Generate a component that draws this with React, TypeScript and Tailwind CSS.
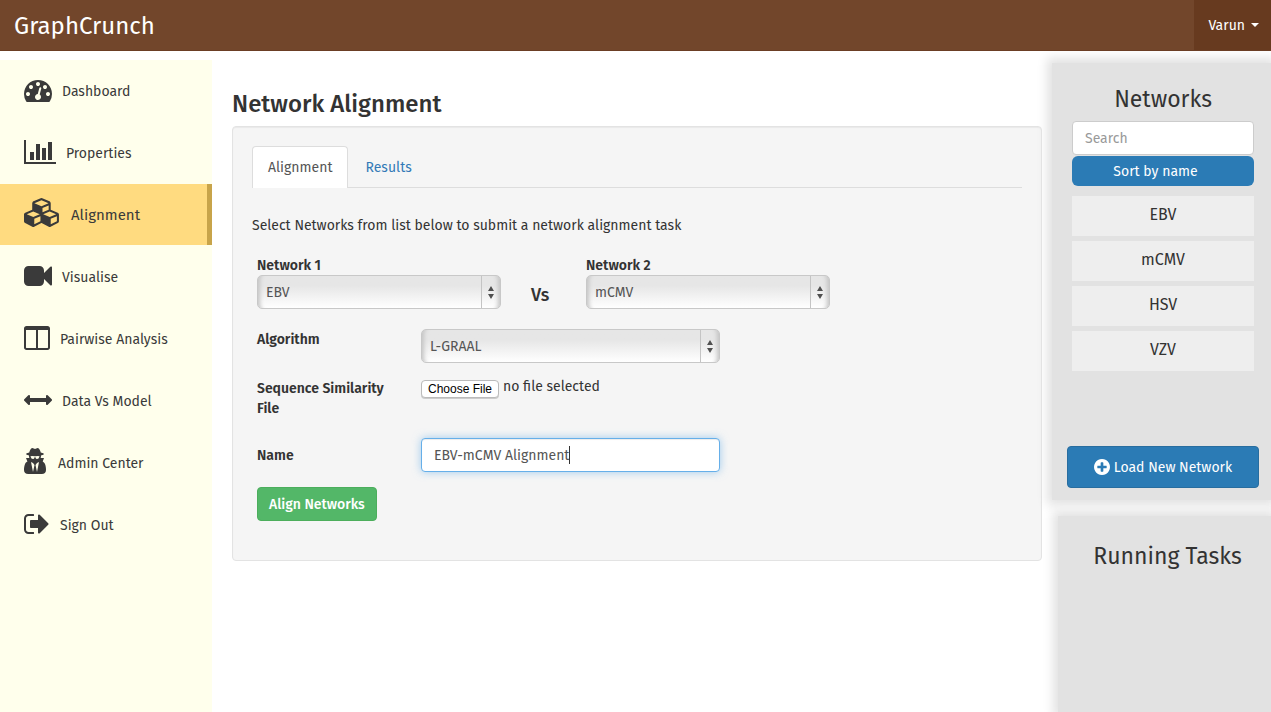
import React, { useState } from "react";

type Glyph = { path: string; viewBox: string; size: string };

const glyphs = {
  dashboard: {
    viewBox: "0 0 1792 1792",
    size: "h-7 w-7",
    path: "M384 1152q0-53-37.5-90.5t-90.5-37.5-90.5 37.5-37.5 90.5 37.5 90.5 90.5 37.5 90.5-37.5 37.5-90.5zm192-448q0-53-37.5-90.5t-90.5-37.5-90.5 37.5-37.5 90.5 37.5 90.5 90.5 37.5 90.5-37.5 37.5-90.5zm428 481l101-382q6-26-7.5-48.5t-38.5-29.5-48 6.5-30 39.5l-101 382q-60 5-107 43.5t-63 98.5q-20 77 20 146t117 89 146-20 89-117q16-60-6-117t-72-91zm660-33q0-53-37.5-90.5t-90.5-37.5-90.5 37.5-37.5 90.5 37.5 90.5 90.5 37.5 90.5-37.5 37.5-90.5zm-640-640q0-53-37.5-90.5t-90.5-37.5-90.5 37.5-37.5 90.5 37.5 90.5 90.5 37.5 90.5-37.5 37.5-90.5zm448 192q0-53-37.5-90.5t-90.5-37.5-90.5 37.5-37.5 90.5 37.5 90.5 90.5 37.5 90.5-37.5 37.5-90.5zm320 448q0 261-141 483-19 29-54 29h-1402q-35 0-54-29-141-221-141-483 0-182 71-348t191-286 286-191 348-71 348 71 286 191 191 286 71 348z",
  },
  bars: {
    viewBox: "0 0 2048 1792",
    size: "h-7 w-8",
    path: "M640 896v512h-256v-512h256zm384-512v1024h-256v-1024h256zm1024 1152v128h-2048v-1536h128v1408h1920zm-640-896v768h-256v-768h256zm384-384v1152h-256v-1152h256z",
  },
  cubes: {
    viewBox: "0 0 2304 1792",
    size: "h-[29px] w-[37px]",
    path: "M640 1632l384-192v-314l-384 164v342zm-64-454l404-173-404-173-404 173zm1088 454l384-192v-314l-384 164v342zm-64-454l404-173-404-173-404 173zm-448-293l384-165v-266l-384 164v267zm-64-379l441-189-441-189-441 189zm1088 518v416q0 36-19 67t-52 47l-448 224q-25 14-57 14t-57-14l-448-224q-5-2-7-4-2 2-7 4l-448 224q-25 14-57 14t-57-14l-448-224q-33-16-52-47t-19-67v-416q0-38 21.5-70t56.5-48l434-186v-400q0-38 21.5-70t56.5-48l448-192q23-10 50-10t50 10l448 192q35 16 56.5 48t21.5 70v400l434 186q36 16 57 48t21 70z",
  },
  video: {
    viewBox: "0 0 1792 1792",
    size: "h-7 w-7",
    path: "M1792 352v1088q0 42-39 59-13 5-25 5-27 0-45-19l-403-403v166q0 119-84.5 203.5t-203.5 84.5h-704q-119 0-203.5-84.5t-84.5-203.5v-704q0-119 84.5-203.5t203.5-84.5h704q119 0 203.5 84.5t84.5 203.5v165l403-402q18-19 45-19 12 0 25 5 39 17 39 59z",
  },
  columns: {
    viewBox: "0 0 1664 1792",
    size: "h-7 w-[26px]",
    path: "M160 1536h608v-1152h-640v1120q0 13 9.5 22.5t22.5 9.5zm1376-32v-1120h-640v1152h608q13 0 22.5-9.5t9.5-22.5zm128-1216v1216q0 66-47 113t-113 47h-1344q-66 0-113-47t-47-113v-1216q0-66 47-113t113-47h1344q66 0 113 47t47 113z",
  },
  arrows: {
    viewBox: "0 0 1792 1792",
    size: "h-7 w-7",
    path: "M1792 896q0 26-19 45l-256 256q-19 19-45 19t-45-19-19-45v-128h-1024v128q0 26-19 45t-45 19-45-19l-256-256q-19-19-19-45t19-45l256-256q19-19 45-19t45 19 19 45v128h1024v-128q0-26 19-45t45-19 45 19l256 256q19 19 19 45z",
  },
  agent: {
    viewBox: "0 0 1408 1792",
    size: "h-7 w-[22px]",
    path: "M576 1536l96-448-96-128-128-64zm256 0l128-640-128 64-96 128zm160-1010q-2-4-4-6-10-8-96-8-70 0-167 19-7 2-21 2t-21-2q-97-19-167-19-86 0-96 8-2 2-4 6 2 18 4 27 2 3 7.5 6.5t7.5 10.5q2 4 7.5 20.5t7 20.5 7.5 17 8.5 17 9 14 12 13.5 14 9.5 17.5 8 20.5 4 24.5 2q36 0 59-12.5t32.5-30 14.5-34.5 11.5-29.5 17.5-12.5h12q11 0 17.5 12.5t11.5 29.5 14.5 34.5 32.5 30 59 12.5q13 0 24.5-2t20.5-4 17.5-8 14-9.5 12-13.5 9-14 8.5-17 7.5-17 7-20.5 7.5-20.5q2-7 7.5-10.5t7.5-6.5q2-9 4-27zm416 879q0 121-73 190t-194 69h-874q-121 0-194-69t-73-190q0-61 4.5-118t19-125.5 37.5-123.5 63.5-103.5 93.5-74.5l-90-220h214q-22-64-22-128 0-12 2-32-194-40-194-96 0-57 210-99 17-62 51.5-134t70.5-114q32-37 76-37 30 0 84 31t84 31 84-31 84-31q44 0 76 37 36 42 70.5 114t51.5 134q210 42 210 99 0 56-194 96 7 81-20 160h214l-82 225q63 33 107.5 96.5t65.5 143.5 29 151.5 8 148.5z",
  },
  signOut: {
    viewBox: "0 0 1664 1792",
    size: "h-7 w-[26px]",
    path: "M640 1440q0 4 1 20t.5 26.5-3 23.5-10 19.5-20.5 6.5h-320q-119 0-203.5-84.5t-84.5-203.5v-704q0-119 84.5-203.5t203.5-84.5h320q13 0 22.5 9.5t9.5 22.5q0 4 1 20t.5 26.5-3 23.5-10 19.5-20.5 6.5h-320q-66 0-113 47t-47 113v704q0 66 47 113t113 47h312l11.5 1 11.5 3 8 5.5 7 9 2 13.5zm928-544q0 26-19 45l-544 544q-19 19-45 19t-45-19-19-45v-288h-448q-26 0-45-19t-19-45v-384q0-26 19-45t45-19h448v-288q0-26 19-45t45-19 45 19l544 544q19 19 19 45z",
  },
  plusCircle: {
    viewBox: "128 128 1536 1536",
    size: "h-4 w-4",
    path: "M1344 960v-128q0-26-19-45t-45-19h-256v-256q0-26-19-45t-45-19h-128q-26 0-45 19t-19 45v256h-256q-26 0-45 19t-19 45v128q0 26 19 45t45 19h256v256q0 26 19 45t45 19h128q26 0 45-19t19-45v-256h256q26 0 45-19t19-45zm320-64q0 209-103 385.5t-279.5 279.5-385.5 103-385.5-103-279.5-279.5-103-385.5 103-385.5 279.5-279.5 385.5-103 385.5 103 279.5 279.5 103 385.5z",
  },
} satisfies Record<string, Glyph>;

function Icon({ glyph }: { glyph: Glyph }) {
  return (
    <svg viewBox={glyph.viewBox} className={`${glyph.size} shrink-0 fill-current`} aria-hidden="true">
      <path d={glyph.path} />
    </svg>
  );
}

const navItems: { label: string; glyph: Glyph; gap: string; active?: boolean }[] = [
  { label: "Dashboard", glyph: glyphs.dashboard, gap: "gap-2.5" },
  { label: "Properties", glyph: glyphs.bars, gap: "gap-2.5" },
  { label: "Alignment", glyph: glyphs.cubes, gap: "gap-2.5", active: true },
  { label: "Visualise", glyph: glyphs.video, gap: "gap-2.5" },
  { label: "Pairwise Analysis", glyph: glyphs.columns, gap: "gap-2.5" },
  { label: "Data Vs Model", glyph: glyphs.arrows, gap: "gap-2.5" },
  { label: "Admin Center", glyph: glyphs.agent, gap: "gap-3" },
  { label: "Sign Out", glyph: glyphs.signOut, gap: "gap-2.5" },
];

const networks = ["EBV", "mCMV", "HSV", "VZV"];
const algorithms = ["L-GRAAL", "MI-GRAAL"];

function Select({ id, options, initial }: { id: string; options: string[]; initial: string }) {
  return (
    <div className="relative h-[34px] w-full">
      <select
        id={id}
        defaultValue={initial}
        className="h-full w-full appearance-none rounded-[5px] border border-[#c8c8c8] bg-linear-to-b from-[#e6e6e6] from-30% to-white px-2 pt-0.5 text-sm text-[#555] shadow-[inset_7px_0_4px_-5px_#c4c4c4,inset_-7px_0_4px_-5px_#c4c4c4]"
      >
        {options.map((option) => (
          <option key={option}>{option}</option>
        ))}
      </select>
      <span className="pointer-events-none absolute inset-y-px right-0 flex w-5 items-center justify-center border-l border-[#c4c4c4] pr-0.5">
        <svg viewBox="0 0 6 13" className="h-[13px] w-1.5 fill-[#505050]" aria-hidden="true">
          <path d="M3 0 6 5H0zM3 13 0 8h6z" />
        </svg>
      </span>
    </div>
  );
}

function Sidebar() {
  return (
    <nav className="mt-[9px] w-[212px] shrink-0 bg-[#ffffec]">
      <ul className="flex flex-col gap-px">
        {navItems.map((item) => (
          <li key={item.label}>
            <a
              href="#"
              className={`flex h-[61px] items-center pl-6 text-[#3a3a3a] ${item.gap} ${
                item.active ? "border-r-[5px] border-[#c8a44a] bg-[#ffdb80] pb-1 text-[15px]" : "pb-0.5 text-sm"
              }`}
            >
              <Icon glyph={item.glyph} />
              <span className="pt-1">{item.label}</span>
            </a>
          </li>
        ))}
      </ul>
    </nav>
  );
}

function AlignmentForm() {
  const [name, setName] = useState("EBV-mCMV Alignment");
  const [file, setFile] = useState("");
  return (
    <form className="px-[5px]" onSubmit={(event) => event.preventDefault()}>
      <div className="flex">
        <div className="w-[244px]">
          <label htmlFor="network1" className="block h-5 pt-px text-sm leading-5 font-semibold">
            Network 1
          </label>
          <Select id="network1" options={networks} initial="EBV" />
        </div>
        <p className="w-[85px] pt-7 pl-[30px] text-lg leading-6 font-medium">Vs</p>
        <div className="w-[244px]">
          <label htmlFor="network2" className="block h-5 pt-px text-sm leading-5 font-semibold">
            Network 2
          </label>
          <Select id="network2" options={networks} initial="mCMV" />
        </div>
      </div>

      <div className="mt-5 grid grid-cols-[134px_299px] gap-x-[30px] text-sm leading-5">
        <label htmlFor="algorithm" className="pt-px font-semibold">
          Algorithm
        </label>
        <Select id="algorithm" options={algorithms} initial="L-GRAAL" />

        <span id="file-label" className="mt-4 font-semibold">
          Sequence Similarity File
        </span>
        <label className="relative mt-3.5 flex items-start gap-1">
          <input
            type="file"
            aria-labelledby="file-label"
            className="sr-only"
            onChange={(event) => setFile(event.target.files?.[0]?.name ?? "")}
          />
          <span className="mt-[3px] rounded border border-[#bbb] bg-white px-1.5 font-['Liberation_Sans',sans-serif] text-xs leading-4 text-black shadow-[0_1px_0_#ccc]">
            Choose File
          </span>
          <span>{file || "no file selected"}</span>
        </label>

        <label htmlFor="name" className="mt-[27px] font-semibold">
          Name
        </label>
        <div className="relative mt-[19px]">
          <input
            id="name"
            value={name}
            onChange={(event) => setName(event.target.value)}
            className="block h-[34px] w-full rounded border border-[#66afe9] bg-white px-3 text-sm text-[#555] shadow-[inset_0_1px_1px_rgba(0,0,0,0.075),0_0_8px_rgba(102,175,233,0.6)] outline-none"
          />
          <span className="pointer-events-none absolute top-2 left-[148px] h-[18px] w-px bg-[#333]" />
        </div>
      </div>

      <button
        type="submit"
        className="mt-[15px] h-[34px] rounded border border-[#4cae5c] bg-[#53b768] px-[11px] pt-0.5 text-sm font-medium text-white"
      >
        Align Networks
      </button>
    </form>
  );
}

function NetworksPanel() {
  return (
    <section className="bg-[#e2e2e2] pt-[22px] pr-3 pb-3 pl-[15px] shadow-[0_0_10px_5px_#e2e2e2]">
      <div className="px-[5px]">
        <h2 className="pt-px text-center text-[23px] leading-[26px]">Networks</h2>
        <input
          type="search"
          aria-label="Search networks"
          placeholder="Search"
          className="mt-[9px] block h-[34px] w-full rounded border border-[#ccc] bg-white px-3 text-sm placeholder:text-[#999]"
        />
        <button
          type="button"
          className="mt-px h-[30px] w-full rounded-md bg-[#2b7bb5] pt-0.5 pr-[15px] text-sm text-white"
        >
          Sort by name
        </button>
        <ul className="mt-[10px] flex flex-col gap-[5px]">
          {networks.map((network) => (
            <li key={network} className="h-10 bg-[#eee] text-center text-base leading-[38px]">
              {network}
            </li>
          ))}
        </ul>
      </div>
      <button
        type="button"
        className="mt-[75px] flex h-[42px] w-full items-center justify-center gap-1 rounded border border-[#286d9f] bg-[#2b7bb5] text-sm text-white"
      >
        <Icon glyph={glyphs.plusCircle} />
        <span className="pt-0.5">Load New Network</span>
      </button>
    </section>
  );
}

export default function App() {
  return (
    <div className="flex min-h-screen flex-col overflow-hidden bg-white font-['Fira_Sans','Open_Sans',sans-serif] text-sm leading-5 text-[#333]">
      <header className="relative z-10 flex h-[51px] shrink-0 items-stretch justify-between border-b border-[#6b3e24] bg-[#72462b] text-white">
        <a href="#" className="flex items-center pt-0.5 pl-3.5 text-2xl">
          GraphCrunch
        </a>
        <button type="button" className="flex items-center gap-1.5 bg-[#673a1f] px-[14px] pr-3 text-sm">
          <span className="pt-0.5">Varun</span>
          <svg viewBox="0 0 8 4" className="h-1 w-2 fill-current" aria-hidden="true">
            <path d="M0 0h8L4 4z" />
          </svg>
        </button>
      </header>

      <div className="flex grow">
        <Sidebar />

        <main className="min-w-0 grow px-5 pt-[39px] pr-[10px]">
          <h1 className="text-2xl leading-7 font-medium">Network Alignment</h1>
          <div className="mt-2 rounded border border-[#e3e3e3] bg-[#f5f5f5] p-[19px] pb-[39px] shadow-[inset_0_1px_1px_rgba(0,0,0,0.05)]">
            <div role="tablist" className="flex border-b border-[#ddd]">
              <button
                type="button"
                role="tab"
                aria-selected="true"
                className="-mb-px h-[42px] rounded-t border border-b-0 border-[#ddd] bg-white px-[15px] text-[#555]"
              >
                Alignment
              </button>
              <button type="button" role="tab" aria-selected="false" className="px-[17px] pt-0.5 text-[#337ab7]">
                Results
              </button>
            </div>
            <p className="mt-7 mb-[19px]">Select Networks from list below to submit a network alignment task</p>
            <AlignmentForm />
          </div>
        </main>

        <aside className="flex w-[219px] shrink-0 flex-col gap-4 pt-3">
          <NetworksPanel />
          <section className="ml-1.5 grow bg-[#e2e2e2] pt-[27px] pl-1.5 shadow-[0_0_10px_5px_#e2e2e2]">
            <h2 className="text-center text-[23px] leading-[26px]">Running Tasks</h2>
          </section>
        </aside>
      </div>
    </div>
  );
}
